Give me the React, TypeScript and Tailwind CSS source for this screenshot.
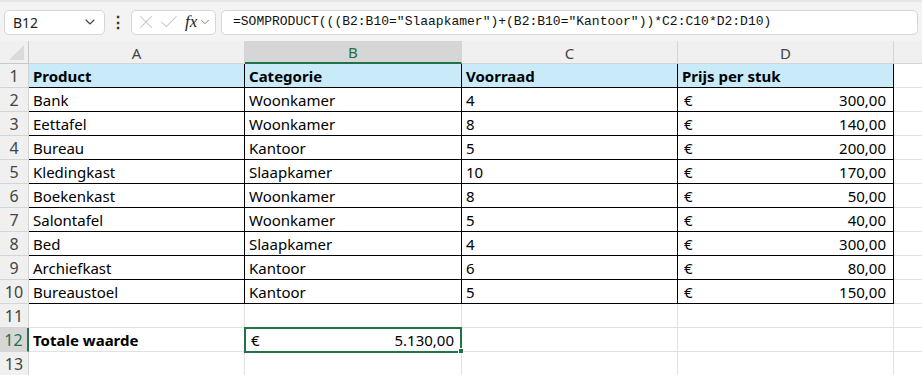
import { ChevronDown, Check, X } from 'lucide-react';

type Row = { product: string; category: string; stock: string; price: string };

const ROWS: Row[] = [
    { product: 'Bank', category: 'Woonkamer', stock: '4', price: '300,00' },
    { product: 'Eettafel', category: 'Woonkamer', stock: '8', price: '140,00' },
    { product: 'Bureau', category: 'Kantoor', stock: '5', price: '200,00' },
    { product: 'Kledingkast', category: 'Slaapkamer', stock: '10', price: '170,00' },
    { product: 'Boekenkast', category: 'Woonkamer', stock: '8', price: '50,00' },
    { product: 'Salontafel', category: 'Woonkamer', stock: '5', price: '40,00' },
    { product: 'Bed', category: 'Slaapkamer', stock: '4', price: '300,00' },
    { product: 'Archiefkast', category: 'Kantoor', stock: '6', price: '80,00' },
    { product: 'Bureaustoel', category: 'Kantoor', stock: '5', price: '150,00' },
];

const FORMULA = '=SOMPRODUCT(((B2:B10="Slaapkamer")+(B2:B10="Kantoor"))*C2:C10*D2:D10)';

const cell = 'h-6 border-r border-b px-1 pt-px leading-[23px] whitespace-nowrap overflow-hidden';
const rowHead = 'h-6 border-r border-b border-[#d4d4d4] bg-[#f0f0f0] pt-px text-center text-[16px] leading-[23px] text-[#444]';

function Toolbar() {
    return (
        <div className="flex h-[41px] items-center gap-[5px] border-t-2 border-[#e6e6e6] bg-[#f3f3f3] px-1 pt-px">
            <div className="flex h-[25px] w-[101px] items-center justify-between rounded-[5px] border border-[#d6d6d6] bg-white pr-1.5 pl-2 text-[14px] text-[#222]">
                <span>B12</span>
                <ChevronDown className="size-4 text-[#444]" strokeWidth={1.6} />
            </div>
            <span className="w-4 text-center text-[16px] leading-none font-bold text-[#333]">⋮</span>
            <div className="flex h-[25px] w-[85px] items-center rounded-[5px] border border-[#d6d6d6] bg-white pl-[3px] text-[#c4c4c4]">
                <X className="size-[22px]" strokeWidth={1.1} />
                <Check className="ml-[1px] size-[22px]" strokeWidth={1.1} />
                <span className="ml-[5px] font-['Liberation_Serif',serif] text-[17px] text-[#222] italic">fx</span>
                <ChevronDown className="ml-px size-3.5 text-[#777]" strokeWidth={1.6} />
            </div>
            <div className="flex h-[25px] flex-1 items-center rounded-[5px] border border-[#d6d6d6] bg-white pl-[11px] font-['Liberation_Mono',monospace] text-[13px] text-[#111]">
                {FORMULA}
            </div>
        </div>
    );
}

function EmptyRow({ n }: { n: number }) {
    return (
        <>
            <div className={rowHead}>{n}</div>
            <div className={`${cell} border-[#e1e1e1]`} />
            <div className={`${cell} border-[#e1e1e1]`} />
            <div className={`${cell} border-[#e1e1e1]`} />
            <div className={`${cell} border-[#e1e1e1]`} />
            <div className={`${cell} border-r-0 border-[#e1e1e1]`} />
        </>
    );
}

export default function App() {
    return (
        <div className="h-[375px] w-[922px] overflow-hidden bg-white font-['Noto_Sans',sans-serif] text-[15px] text-black">
            <Toolbar />
            <div className="grid grid-cols-[29px_216px_217px_216px_216px_1fr]">
                {/* column headers */}
                <div className="flex h-[23px] items-end justify-end border-r border-b border-[#c8c8c8] bg-[#f0f0f0] pr-1 pb-[3px]">
                    <svg width="15" height="15" viewBox="0 0 15 15">
                        <polygon points="15,0 15,15 0,15" fill="#dadada" />
                    </svg>
                </div>
                <div className="h-[23px] border-r border-b border-[#d4d4d4] bg-[#f0f0f0] pt-px text-center leading-[23px] text-[#444]">A</div>
                <div className="h-[23px] border-r border-b-2 border-r-[#d4d4d4] border-b-[#217346] bg-[#d6d6d6] pt-px text-center leading-[21px] text-[#217346]">B</div>
                <div className="h-[23px] border-r border-b border-[#d4d4d4] bg-[#f0f0f0] pt-px text-center leading-[23px] text-[#444]">C</div>
                <div className="h-[23px] border-r border-b border-[#d4d4d4] bg-[#f0f0f0] pt-px text-center leading-[23px] text-[#444]">D</div>
                <div className="h-[23px] border-b border-[#d4d4d4] bg-[#f0f0f0]" />

                {/* row 1 headings */}
                <div className={rowHead}>1</div>
                <div className={`${cell} border-black bg-[#c8eaf9] font-bold`}>Product</div>
                <div className={`${cell} border-black bg-[#c8eaf9] font-bold`}>Categorie</div>
                <div className={`${cell} border-black bg-[#c8eaf9] font-bold`}>Voorraad</div>
                <div className={`${cell} border-black bg-[#c8eaf9] font-bold`}>Prijs per stuk</div>
                <div className={`${cell} border-r-0 border-[#e1e1e1]`} />

                {ROWS.map((row, i) => (
                    <div key={row.product} className="contents">
                        <div className={rowHead}>{i + 2}</div>
                        <div className={`${cell} border-black`}>{row.product}</div>
                        <div className={`${cell} border-black`}>{row.category}</div>
                        <div className={`${cell} border-black`}>{row.stock}</div>
                        <div className={`${cell} flex justify-between border-black pr-[7px] pl-1.5`}>
                            <span>€</span>
                            <span>{row.price}</span>
                        </div>
                        <div className={`${cell} border-r-0 border-[#e1e1e1]`} />
                    </div>
                ))}

                <EmptyRow n={11} />

                {/* row 12 */}
                <div className="h-6 border-r-2 border-b border-r-[#217346] border-b-[#d4d4d4] bg-[#d6d6d6] pt-px text-center text-[16px] leading-[23px] text-[#217346]">12</div>
                <div className={`${cell} border-[#e1e1e1] font-bold`}>Totale waarde</div>
                <div className={`${cell} relative flex justify-between overflow-visible border-[#e1e1e1] pr-[7px] pl-1.5`}>
                    <span>€</span>
                    <span>5.130,00</span>
                    <div className="pointer-events-none absolute -top-px -left-px h-[26px] w-[218px] border-2 border-[#217346]" />
                    <div className="absolute -right-[3px] -bottom-[3px] size-[6px] border border-white bg-[#217346]" />
                </div>
                <div className={`${cell} border-[#e1e1e1]`} />
                <div className={`${cell} border-[#e1e1e1]`} />
                <div className={`${cell} border-r-0 border-[#e1e1e1]`} />

                <EmptyRow n={13} />
            </div>
        </div>
    );
}
